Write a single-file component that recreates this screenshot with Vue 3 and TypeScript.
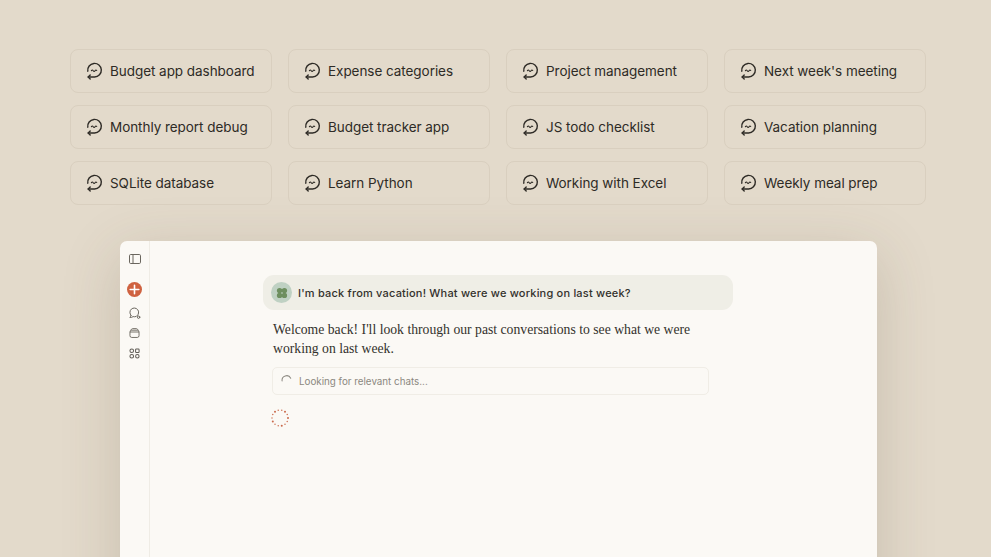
<script setup lang="ts">
const chips: string[] = [
  'Budget app dashboard', 'Expense categories', 'Project management', "Next week's meeting",
  'Monthly report debug', 'Budget tracker app', 'JS todo checklist', 'Vacation planning',
  'SQLite database', 'Learn Python', 'Working with Excel', 'Weekly meal prep',
]
const dots = Array.from({ length: 14 }, (_, i) => {
  const a = (i / 14) * Math.PI * 2
  return { x: 10 + 8 * Math.cos(a), y: 10 + 8 * Math.sin(a), big: i % 3 === 0 }
})
</script>

<template>
  <div class="page">
    <section class="chips">
      <div v-for="chip in chips" :key="chip" class="chip">
        <svg class="chip-icon" viewBox="0 0 18 18" fill="none" stroke="currentColor" stroke-width="1.4" stroke-linecap="round" stroke-linejoin="round">
          <path d="M2.8 9.2A6.8 6.8 0 1 1 9.6 15H3.2" />
          <path d="M5.2 12.9 3.2 15l2 2" />
          <path d="M6.4 8.7c.7-.9 1.2-.9 1.8 0s1.3.9 1.9 0 1.1-.9 1.6-.2" stroke-width="1.1" />
        </svg>
        <span>{{ chip }}</span>
      </div>
    </section>

    <section class="window">
      <aside class="rail">
        <svg class="rail-icon panel" viewBox="0 0 12 10" fill="none" stroke="#6a665e" stroke-width="1">
          <rect x=".5" y=".5" width="11" height="9" rx="1.2" />
          <path d="M4 .5v9" />
        </svg>
        <div class="new-btn">
          <svg viewBox="0 0 16 16" fill="none" stroke="#fff" stroke-width="1.7" stroke-linecap="round"><path d="M8 3.4v9.2M3.4 8h9.2" /></svg>
        </div>
        <svg class="rail-icon chats" viewBox="0 0 12 12" fill="none" stroke="#6a665e" stroke-width="1" stroke-linecap="round" stroke-linejoin="round">
          <path d="M2 8.4A4.4 4.4 0 1 1 8 8.9" />
          <path d="M2 8.4C1.7 9.6 1.2 10 .8 10.4c1.4.2 2.6-.2 3.3-.8 1 .3 2 .3 3-.1" />
          <circle cx="9.6" cy="10.2" r="1.2" />
        </svg>
        <svg class="rail-icon projects" viewBox="0 0 12 11" fill="none" stroke="#6a665e" stroke-width="1">
          <rect x="1" y="2.4" width="10" height="8" rx="2" />
          <path d="M2.2 2.4C2.6 1 3.2.7 4 .7h4c.8 0 1.4.3 1.8 1.7M1 4.4h10" />
        </svg>
        <svg class="rail-icon apps" viewBox="0 0 12 12" fill="none" stroke="#5f5b54" stroke-width="1.1">
          <circle cx="3" cy="3" r="2" />
          <rect x="7.2" y="1" width="3.8" height="4" rx=".8" />
          <circle cx="3" cy="9" r="2" />
          <rect x="7.2" y="7" width="3.8" height="4" rx="1.9" />
        </svg>
      </aside>

      <main class="chat">
        <div class="thread">
          <div class="user-msg">
            <div class="avatar">
              <svg viewBox="0 0 12 12" fill="#6d8f5f">
                <circle cx="3.6" cy="3.6" r="2.7" />
                <circle cx="8.4" cy="3.6" r="2.7" />
                <circle cx="3.6" cy="8.4" r="2.7" />
                <circle cx="8.4" cy="8.4" r="2.7" />
              </svg>
            </div>
            <span class="user-text">I'm back from vacation! What were we working on last week?</span>
          </div>
          <p class="reply">Welcome back! I'll look through our past conversations to see what we were working on last week.</p>
          <div class="search">
            <svg class="arc" viewBox="0 0 12 12" fill="none" stroke="#8b8880" stroke-width="1.1" stroke-linecap="round">
              <path d="M1.2 7.6A5 5 0 0 1 10.6 4.6" />
            </svg>
            <span class="search-text">Looking for relevant chats...</span>
          </div>
          <svg class="loader" viewBox="0 0 20 20">
            <circle v-for="(d, i) in dots" :key="i" :cx="d.x" :cy="d.y" :r="d.big ? 1 : 0.7" fill="#c9694b" />
          </svg>
        </div>
      </main>
    </section>
  </div>
</template>

<style>
html, body { margin: 0; background: #e3dacb; }
</style>

<style scoped>
.page {
  width: 991px;
  height: 557px;
  overflow: hidden;
  background: #e3dacb;
  padding-top: 49px;
  box-sizing: border-box;
}
.chips {
  display: grid;
  grid-template-columns: repeat(4, 202px);
  gap: 12px 16px;
  margin-left: 70px;
}
.chip {
  height: 44px;
  box-sizing: border-box;
  display: flex;
  align-items: center;
  gap: 7px;
  padding-left: 14px;
  border: 1.5px solid #d9cfbf;
  border-radius: 8px;
  color: #2e2b26;
  font: 400 13.5px/16px Inter, "Liberation Sans", sans-serif;
  letter-spacing: -0.05px;
}
.chip-icon { width: 18px; height: 18px; flex: none; }
.window {
  width: 757px;
  height: 400px;
  margin: 36px 0 0 120px;
  display: flex;
  background: #fbf9f5;
  border-radius: 7px 7px 0 0;
  box-shadow: 0 14px 60px rgba(90, 75, 55, 0.2);
}
.rail {
  width: 29px;
  flex: none;
  border-right: 1px solid #efece5;
  display: flex;
  flex-direction: column;
  align-items: center;
  padding-top: 13px;
  box-sizing: content-box;
}
.rail-icon { display: block; }
.panel { width: 12px; height: 10px; }
.new-btn {
  width: 15px;
  height: 15px;
  margin-top: 18px;
  border-radius: 50%;
  background: #cf6240;
}
.new-btn svg { display: block; width: 15px; height: 15px; }
.chats { width: 12px; height: 12px; margin-top: 10px; }
.projects { width: 11px; height: 10px; margin-top: 9px; }
.apps { width: 11px; height: 11px; margin-top: 10px; }
.chat { flex: 1; }
.thread {
  margin-left: 113px;
  width: 470px;
  padding-top: 34px;
  display: flex;
  flex-direction: column;
}
.user-msg {
  height: 35px;
  display: flex;
  align-items: center;
  gap: 6px;
  padding-left: 8px;
  background: #efeee6;
  border-radius: 11px;
  color: #33312c;
  font: 500 11px/14px Inter, "Liberation Sans", sans-serif;
  letter-spacing: 0.2px;
}
.user-text { margin-top: 1px; }
.avatar {
  width: 21px;
  height: 21px;
  border-radius: 50%;
  background: #bfd1c3;
  display: flex;
  align-items: center;
  justify-content: center;
}
.avatar svg { width: 12px; height: 12px; }
.reply {
  margin: 11px 0 0 10px;
  width: 440px;
  color: #33312c;
  font: 400 13.7px/18.5px "Liberation Serif", serif;
  letter-spacing: 0;
}
.search {
  margin: 9px 0 0 9px;
  width: 437px;
  height: 28px;
  box-sizing: border-box;
  display: flex;
  align-items: center;
  gap: 7px;
  padding-left: 8px;
  border: 1px solid #f0ede6;
  border-radius: 5px;
  color: #8b8880;
  font: 400 9.8px/12px Inter, "Liberation Sans", sans-serif;
  letter-spacing: 0;
}
.search-text { margin-top: 1px; }
.arc { width: 11px; height: 11px; margin-top: -3px; }
.loader { width: 20px; height: 20px; margin: 13px 0 0 7px; }
</style>
